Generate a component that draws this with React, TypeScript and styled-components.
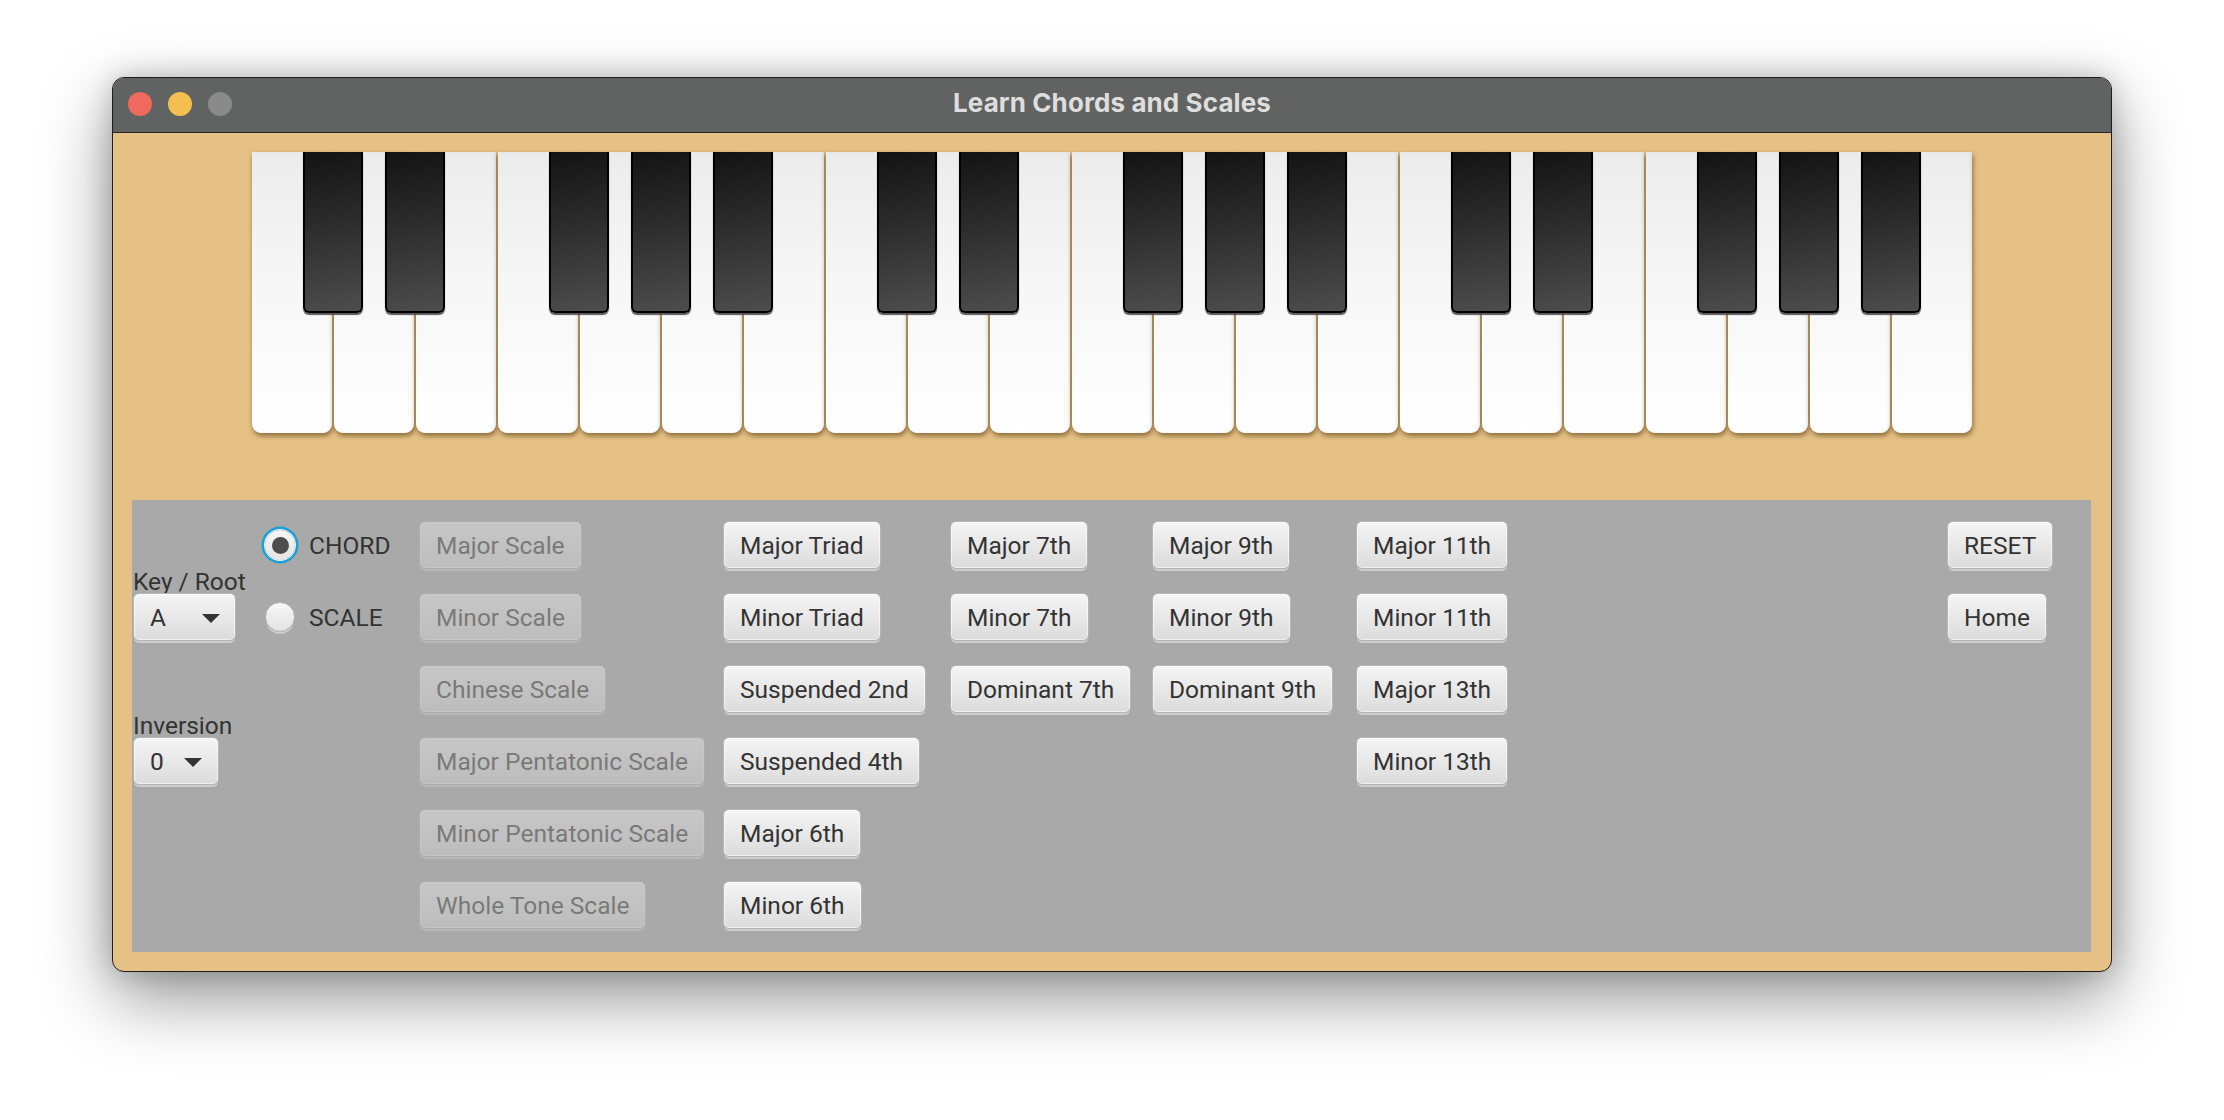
import React from 'react';
import styled, { createGlobalStyle, css } from 'styled-components';

const GlobalStyle = createGlobalStyle`
  html, body { margin: 0; padding: 0; background: #ffffff; }
  body { font-family: Roboto, "Liberation Sans", sans-serif; }
  * { box-sizing: border-box; }
`;

const Page = styled.div`
  width: 2224px;
  height: 1120px;
  display: flex;
  justify-content: center;
  align-items: flex-start;
  padding-top: 77px;
  background: #ffffff;
  overflow: hidden;
`;

const Window = styled.div`
  width: 2000px;
  height: 895px;
  border-radius: 12px;
  overflow: hidden;
  border: 1px solid #1d1d1d;
  box-shadow: 0 26px 70px rgba(0, 0, 0, 0.42), 0 0 28px rgba(0, 0, 0, 0.2);
  display: flex;
  flex-direction: column;
  background: #e5c185;
`;

const TitleBar = styled.div`
  height: 55px;
  flex: none;
  background: #616362;
  border-bottom: 1px solid #262626;
  display: grid;
  grid-template-columns: 1fr auto 1fr;
  align-items: center;
  padding: 0 15px;
`;

const Lights = styled.div`
  display: flex;
  gap: 16px;
  margin-top: -2px;
`;

const Light = styled.span<{ $color: string }>`
  width: 24px;
  height: 24px;
  border-radius: 50%;
  background: ${(p) => p.$color};
`;

const Title = styled.div`
  font-family: Inter, Roboto, sans-serif;
  font-weight: 700;
  font-size: 26px;
  color: #dedede;
  margin-top: -5px;
  letter-spacing: 0.1px;
`;

const Content = styled.div`
  flex: 1;
  display: flex;
  flex-direction: column;
  padding: 19px 20px 19px 19px;
`;

const Keyboard = styled.div`
  position: relative;
  align-self: center;
  display: flex;
  gap: 2px;
  height: 281px;
  margin-left: 1px;
`;

const WhiteKey = styled.div`
  width: 80px;
  height: 100%;
  background: linear-gradient(#ececec, #f6f6f6 45%, #ffffff);
  border-radius: 0 0 9px 9px;
  box-shadow: 1px 3px 5px rgba(80, 52, 8, 0.6), inset -2px 0 3px rgba(0, 0, 0, 0.05);
`;

const BlackKey = styled.div<{ $left: number }>`
  position: absolute;
  top: 0;
  left: ${(p) => p.$left}px;
  width: 60px;
  height: 161px;
  background: linear-gradient(170deg, #131313, #2c2c2c 45%, #4d4d4d);
  border: 2px solid #000000;
  border-top: none;
  border-radius: 0 0 6px 6px;
  box-shadow: 0 2px 1px rgba(70, 70, 70, 0.9);
`;

const ControlPanel = styled.div`
  margin-top: 67px;
  height: 452px;
  background: #a9a9a9;
  padding: 21px 37px 23px 1px;
  display: grid;
  grid-template-columns: 108px 134px 282px 205px 180px 182px 149px 1fr 107px;
  grid-template-rows: repeat(6, 48px);
  column-gap: 22px;
  row-gap: 24px;
  justify-items: start;
  align-items: start;
  color: #333333;
  font-size: 24.5px;
`;

const chrome = css`
  height: 48px;
  border: 1px solid #b4b4b4;
  border-radius: 6px;
  background: linear-gradient(#f5f5f5, #e8e8e8 50%, #dcdcdc);
  box-shadow: inset 0 1px 0 #ffffff, inset 0 0 0 1px rgba(255, 255, 255, 0.55),
    0 3px 0 -1px #cdcdcd;
  color: #333333;
  font-family: Roboto, "Liberation Sans", sans-serif;
  font-size: 24.5px;
`;

const Button = styled.button<{ $col: number; $row: number; $disabled?: boolean }>`
  ${chrome}
  grid-column: ${(p) => p.$col};
  grid-row: ${(p) => p.$row};
  padding: 0 16px;
  margin: 0;
  white-space: nowrap;
  display: flex;
  align-items: center;
  cursor: default;
  opacity: ${(p) => (p.$disabled ? 0.4 : 1)};
`;

const FieldGroup = styled.div<{ $row: number }>`
  grid-column: 1;
  grid-row: ${(p) => p.$row} / span 2;
  align-self: end;
  display: flex;
  flex-direction: column;
`;

const FieldLabel = styled.div<{ $clip?: boolean }>`
  height: 22px;
  line-height: 22px;
  overflow: ${(p) => (p.$clip ? 'hidden' : 'visible')};
  white-space: nowrap;
  color: #333333;
`;

const Combo = styled.div<{ $w: number; $pr: number }>`
  ${chrome}
  width: ${(p) => p.$w}px;
  display: flex;
  align-items: center;
  justify-content: space-between;
  padding: 0 ${(p) => p.$pr}px 0 16px;
`;

const Arrow = styled.span`
  width: 0;
  height: 0;
  border-left: 9px solid transparent;
  border-right: 9px solid transparent;
  border-top: 9px solid #333333;
  margin-top: 2px;
`;

const Radio = styled.label<{ $row: number }>`
  grid-column: 2;
  grid-row: ${(p) => p.$row};
  align-self: center;
  display: flex;
  align-items: center;
  gap: 14px;
  margin-left: 2px;
  color: #333333;
`;

const RadioDot = styled.span<{ $checked?: boolean }>`
  width: 30px;
  height: 30px;
  border-radius: 50%;
  display: grid;
  place-items: center;
  background: linear-gradient(#f7f7f7, #e3e3e3);
  ${(p) =>
    p.$checked
      ? css`
          border: 1px solid #f2f2f2;
          box-shadow: 0 0 0 1px #e9f1f5, 0 0 0 3.5px #1a9fd8;
          &::after {
            content: '';
            width: 17px;
            height: 17px;
            border-radius: 50%;
            background: #4d4d4d;
          }
        `
      : css`
          border: 1px solid #b4b4b4;
          box-shadow: inset 0 1px 0 #ffffff, 0 3px 0 -1px #cdcdcd;
        `}
`;

const scales = [
  'Major Scale',
  'Minor Scale',
  'Chinese Scale',
  'Major Pentatonic Scale',
  'Minor Pentatonic Scale',
  'Whole Tone Scale',
];

const chordColumns: string[][] = [
  ['Major Triad', 'Minor Triad', 'Suspended 2nd', 'Suspended 4th', 'Major 6th', 'Minor 6th'],
  ['Major 7th', 'Minor 7th', 'Dominant 7th'],
  ['Major 9th', 'Minor 9th', 'Dominant 9th'],
  ['Major 11th', 'Minor 11th', 'Major 13th', 'Minor 13th'],
];

const WHITE_COUNT = 21;
const PITCH = 82;
const blackIndices: number[] = [];
for (let o = 0; o < 3; o++) {
  [0, 1, 3, 4, 5].forEach((n) => blackIndices.push(o * 7 + n));
}

export default function App() {
  return (
    <>
      <GlobalStyle />
      <Page>
        <Window>
          <TitleBar>
            <Lights>
              <Light $color="#ee6a5f" />
              <Light $color="#f5bf4f" />
              <Light $color="#898a8a" />
            </Lights>
            <Title>Learn Chords and Scales</Title>
            <div />
          </TitleBar>
          <Content>
            <Keyboard>
              {Array.from({ length: WHITE_COUNT }).map((_, i) => (
                <WhiteKey key={`w${i}`} />
              ))}
              {blackIndices.map((i) => (
                <BlackKey key={`b${i}`} $left={PITCH * (i + 1) - 31} />
              ))}
            </Keyboard>
            <ControlPanel>
              <FieldGroup $row={1}>
                <FieldLabel $clip>Key / Root</FieldLabel>
                <Combo $w={103} $pr={15}>
                  <span>A</span>
                  <Arrow />
                </Combo>
              </FieldGroup>
              <FieldGroup $row={3}>
                <FieldLabel>Inversion</FieldLabel>
                <Combo $w={86} $pr={16}>
                  <span>0</span>
                  <Arrow />
                </Combo>
              </FieldGroup>
              <Radio $row={1}>
                <RadioDot $checked />
                CHORD
              </Radio>
              <Radio $row={2}>
                <RadioDot />
                SCALE
              </Radio>
              {scales.map((s, i) => (
                <Button key={s} $col={3} $row={i + 1} $disabled>
                  {s}
                </Button>
              ))}
              {chordColumns.map((col, c) =>
                col.map((label, r) => (
                  <Button key={label} $col={4 + c} $row={r + 1}>
                    {label}
                  </Button>
                ))
              )}
              <Button $col={9} $row={1}>RESET</Button>
              <Button $col={9} $row={2}>Home</Button>
            </ControlPanel>
          </Content>
        </Window>
      </Page>
    </>
  );
}
